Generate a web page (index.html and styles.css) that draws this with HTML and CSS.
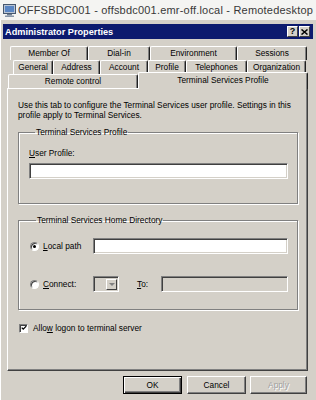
FILE: index.html
```html
<!DOCTYPE html>
<html lang="en">
<head>
  <meta charset="UTF-8">
  <meta name="viewport" content="width=device-width, initial-scale=1">
  <title>Administrator Properties</title>
  <link rel="stylesheet" href="styles.css">
</head>
<body>

  <div class="rdp-bar">
    <svg class="rdp-icon" width="13" height="14" viewBox="0 0 13 14">
      <rect x="0.5" y="1.5" width="12" height="9" fill="#b8c4d4" stroke="#46576e"/>
      <rect x="2" y="3" width="9" height="6" fill="#5a86c4"/>
      <rect x="4" y="11" width="5" height="1.5" fill="#6c7c90"/>
      <rect x="2" y="12.5" width="9" height="1.5" fill="#8896a8"/>
    </svg>
    <span>OFFSBDC001 - offsbdc001.emr-off.local - Remotedesktop</span>
  </div>

  <div class="dialog">
    <div class="titlebar">
      <span class="title">Administrator Properties</span>
      <div class="title-btns">
        <span class="tbtn help">?</span>
        <span class="tbtn close">
          <svg width="7" height="6" viewBox="0 0 7 6"><path d="M0.5 0.5 L6.5 5.5 M6.5 0.5 L0.5 5.5" stroke="#000" stroke-width="1.5"/></svg>
        </span>
      </div>
    </div>

    <div class="tabs">
      <div class="tab-row row1">
        <div class="tab" style="width:78px">Member Of</div>
        <div class="tab" style="width:62px">Dial-in</div>
        <div class="tab" style="width:87px">Environment</div>
        <div class="tab" style="width:70px">Sessions</div>
      </div>
      <div class="tab-row row2">
        <div class="tab" style="width:40px">General</div>
        <div class="tab" style="width:47px">Address</div>
        <div class="tab" style="width:48px">Account</div>
        <div class="tab" style="width:38px">Profile</div>
        <div class="tab" style="width:61px">Telephones</div>
        <div class="tab" style="width:59px">Organization</div>
      </div>
      <div class="tab-row row3">
        <div class="tab" style="width:130px">Remote control</div>
        <div class="tab active" style="width:170px">Terminal Services Profile</div>
      </div>
    </div>

    <div class="panel">
      <p class="desc">Use this tab to configure the Terminal Services user profile. Settings in this<br>profile apply to Terminal Services.</p>

      <fieldset class="group group-profile">
        <legend>Terminal Services Profile</legend>
        <div class="field-label"><u>U</u>ser Profile:</div>
        <div class="textbox"></div>
      </fieldset>

      <fieldset class="group group-home">
        <legend>Terminal Services Home Directory</legend>
        <div class="row">
          <label class="opt"><span class="radio checked"></span><span><u>L</u>ocal path</span></label>
          <div class="textbox grow"></div>
        </div>
        <div class="row row-connect">
          <label class="opt"><span class="radio"></span><span><u>C</u>onnect:</span></label>
          <div class="combo"><span class="combo-btn"></span></div>
          <span class="to"><u>T</u>o:</span>
          <div class="textbox grow disabled"></div>
        </div>
      </fieldset>

      <label class="check-row">
        <span class="checkbox">
          <svg width="8" height="8" viewBox="0 0 8 8"><path d="M1 3.5 L3 5.5 L7 1.5" fill="none" stroke="#000" stroke-width="1.8"/></svg>
        </span>
        <span>Allo<u>w</u> logon to terminal server</span>
      </label>
    </div>

    <div class="buttons">
      <div class="btn default">OK</div>
      <div class="btn">Cancel</div>
      <div class="btn disabled">Apply</div>
    </div>
  </div>

</body>
</html>
```

FILE: styles.css
```css
* {
  box-sizing: border-box;
}
body {
  margin: 0;
  background-color: #d4d0c8;
  font-family: "Liberation Sans", Arial, sans-serif;
  font-size: 8.3px;
  line-height: 10px;
  color: #000;
  overflow: hidden;
}
u {
  text-decoration-thickness: 1px;
  text-underline-offset: 1px;
}

/* remote desktop window bar */
.rdp-bar {
  height: 20px;
  background-color: #f4f4f2;
  display: flex;
  align-items: center;
  padding-left: 3px;
  gap: 2px;
}
.rdp-bar span {
  font-size: 11px;
  color: #383838;
  letter-spacing: 0.2px;
}

/* dialog */
.dialog {
  height: 380px;
  padding: 4px 3px 0 3px;
  box-shadow: inset 1px 0 #fff;
}
.titlebar {
  height: 15px;
  background-color: #0c1a6e;
  display: flex;
  align-items: center;
  justify-content: space-between;
  padding: 0 3px 0 2px;
}
.title {
  color: #fff;
  font-weight: bold;
  font-size: 9.2px;
}
.title-btns {
  display: flex;
  gap: 1px;
}
.tbtn {
  width: 11px;
  height: 11px;
  background-color: #d4d0c8;
  border: 1px solid;
  border-color: #fff #404040 #404040 #fff;
  display: flex;
  align-items: center;
  justify-content: center;
  font-weight: bold;
  font-size: 9px;
  line-height: 9px;
}

/* tabs */
.tabs {
  margin-top: 7px;
}
.tab-row {
  display: flex;
  height: 14px;
}
.row1 {
  margin-left: 7px;
}
.row2 {
  margin-left: 10px;
}
.row3 {
  margin-left: 5px;
}
.tab {
  height: 14px;
  text-align: center;
  line-height: 13px;
  border-top: 1px solid #fff;
  border-left: 1px solid #fff;
  border-right: 1px solid #202020;
  border-radius: 2px 2px 0 0;
  box-shadow: inset -1px 0 #808080;
  white-space: nowrap;
}
.tab.active {
  height: 17px;
  margin-top: -2px;
  margin-bottom: -1px;
  position: relative;
  z-index: 1;
  background-color: #d4d0c8;
  line-height: 14px;
}

/* panel */
.panel {
  width: 301px;
  height: 283px;
  margin-left: 4px;
  border: 1px solid;
  border-color: #fff #404040 #404040 #fff;
  box-shadow: inset -1px -1px #808080;
  padding: 0 0 0 10px;
}
.desc {
  margin: 11px 0 0 0;
}
.group {
  width: 280px;
  margin: 7px 0 0 0;
  padding: 11px 9px 24px 10px;
  border: 1px solid #808080;
  box-shadow: inset 1px 1px #fff, 1px 1px #fff;
}
.group legend {
  padding: 0 1px;
  margin-left: 6px;
  line-height: 10px;
}
.group-home {
  margin-top: 11px;
  padding: 13px 9px 17px 11px;
}
.field-label {
  margin-bottom: 5px;
}
.textbox {
  height: 16px;
  background-color: #fff;
  border: 1px solid;
  border-color: #808080 #fff #fff #808080;
  box-shadow: inset 1px 1px #404040, inset -1px -1px #d4d0c8;
}
.textbox.disabled {
  background-color: #d4d0c8;
}
.grow {
  flex: 1;
}
.row {
  display: flex;
  align-items: center;
}
.row-connect {
  margin-top: 22px;
}
.opt {
  width: 63px;
  display: flex;
  align-items: center;
  gap: 4px;
}
.radio {
  width: 9px;
  height: 9px;
  border-radius: 50%;
  background-color: #fff;
  border: 1px solid;
  border-color: #808080 #fff #fff #808080;
  box-shadow: inset 1px 1px #404040;
  display: flex;
  align-items: center;
  justify-content: center;
}
.radio.checked::after {
  content: "";
  width: 3px;
  height: 3px;
  border-radius: 50%;
  background-color: #000;
}
.combo {
  width: 26px;
  height: 16px;
  background-color: #d4d0c8;
  border: 1px solid;
  border-color: #808080 #fff #fff #808080;
  box-shadow: inset 1px 1px #404040;
  display: flex;
  justify-content: flex-end;
  padding: 2px 1px 1px 2px;
}
.combo-btn {
  width: 11px;
  height: 11px;
  border: 1px solid;
  border-color: #fff #404040 #404040 #fff;
  display: flex;
  align-items: center;
  justify-content: center;
}
.combo-btn::after {
  content: "";
  border-left: 3px solid transparent;
  border-right: 3px solid transparent;
  border-top: 3px solid #808080;
}
.to {
  width: 24px;
  margin-left: 18px;
}
.check-row {
  display: flex;
  align-items: center;
  gap: 5px;
  margin: 13px 0 0 1px;
}
.checkbox {
  width: 9px;
  height: 9px;
  background-color: #fff;
  border: 1px solid;
  border-color: #808080 #fff #fff #808080;
  box-shadow: inset 1px 1px #404040;
  display: flex;
  align-items: center;
  justify-content: center;
}
.checkbox svg {
  width: 6px;
  height: 6px;
}

/* buttons */
.buttons {
  display: flex;
  justify-content: flex-end;
  gap: 5px;
  margin-top: 5px;
  padding-right: 6px;
}
.btn {
  width: 59px;
  height: 18px;
  border: 1px solid;
  border-color: #fff #404040 #404040 #fff;
  box-shadow: inset -1px -1px #808080;
  text-align: center;
  line-height: 16px;
}
.btn.default {
  border: 1px solid #000;
  box-shadow: inset 1px 1px #fff, inset -1px -1px #404040, inset -2px -2px #808080;
}
.btn.disabled {
  width: 57px;
  margin-left: -1px;
  color: #a0a0a0;
  text-shadow: 1px 1px #fff;
}
```
